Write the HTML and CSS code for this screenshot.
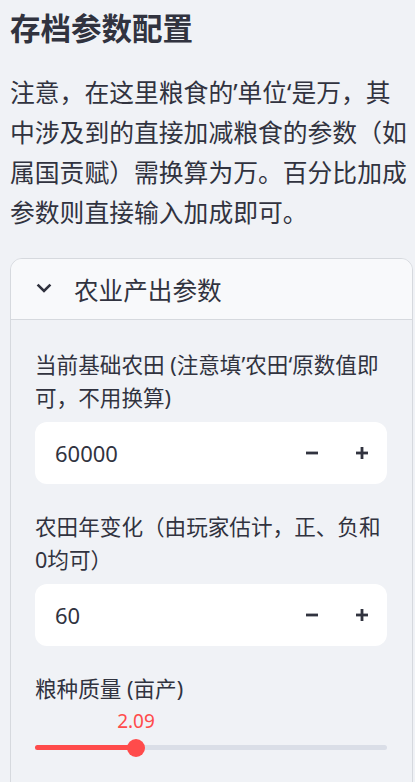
FILE: index.html
```html
<!DOCTYPE html>
<html>
<head>
    <meta charset="utf-8">
    <title>存档参数配置</title>
    <link rel="stylesheet" href="styles.css">
</head>
<body>
    <div class="page">
        <h1 class="title">存档参数配置</h1>
        <p class="note">注意，在这里粮食的’单位‘是万，其中涉及到的直接加减粮食的参数（如属国贡赋）需换算为万。百分比加成参数则直接输入加成即可。</p>

        <div class="expander">
            <div class="expander-header">
                <svg class="chevron" width="16" height="10" viewBox="0 0 16 10">
                    <polyline points="1.6,1.6 8,8 14.4,1.6" fill="none" stroke="#31333f" stroke-width="2.6"/>
                </svg>
                <span>农业产出参数</span>
            </div>

            <div class="expander-body">
                <div class="field">
                    <label class="field-label">当前基础农田 (注意填’农田‘原数值即可，不用换算)</label>
                    <div class="number-input">
                        <span class="number-value">60000</span>
                        <button class="step">
                            <svg width="12" height="12" viewBox="0 0 12 12"><rect x="0" y="4.6" width="12" height="2.8" fill="#31333f"/></svg>
                        </button>
                        <button class="step">
                            <svg width="12" height="12" viewBox="0 0 12 12"><rect x="0" y="4.6" width="12" height="2.8" fill="#31333f"/><rect x="4.6" y="0" width="2.8" height="12" fill="#31333f"/></svg>
                        </button>
                    </div>
                </div>

                <div class="field">
                    <label class="field-label">农田年变化（由玩家估计，正、负和0均可）</label>
                    <div class="number-input">
                        <span class="number-value">60</span>
                        <button class="step">
                            <svg width="12" height="12" viewBox="0 0 12 12"><rect x="0" y="4.6" width="12" height="2.8" fill="#31333f"/></svg>
                        </button>
                        <button class="step">
                            <svg width="12" height="12" viewBox="0 0 12 12"><rect x="0" y="4.6" width="12" height="2.8" fill="#31333f"/><rect x="4.6" y="0" width="2.8" height="12" fill="#31333f"/></svg>
                        </button>
                    </div>
                </div>

                <div class="field">
                    <label class="field-label">粮种质量 (亩产)</label>
                    <div class="slider">
                        <div class="slider-value" style="left: 28.7%">2.09</div>
                        <div class="slider-track">
                            <div class="slider-fill" style="width: 28.7%"></div>
                            <span class="slider-thumb" style="left: 28.7%"></span>
                        </div>
                    </div>
                </div>
            </div>
        </div>
    </div>
</body>
</html>
```

FILE: styles.css
```css
/* Page basics */
body {
    margin: 0;
    background: #f0f2f6;
    color: #31333f;
    font-family: "Noto Sans", "Noto Sans CJK SC", sans-serif;
}

.page {
    padding: 0 2px 0 10px;
}

.title {
    margin: 0;
    padding-top: 8px;
    font-size: 30.5px;
    line-height: 40px;
    font-weight: 700;
}

.note {
    margin: 24px 0 26px;
    font-size: 24.8px;
    line-height: 40px;
}

/* Expander */
.expander {
    border: 1px solid #d6d9de;
    border-radius: 12px;
    overflow: hidden;
    padding-bottom: 60px;
}

.expander-header {
    display: flex;
    align-items: center;
    gap: 22px;
    height: 60px;
    padding-left: 25px;
    background: #f8f9fb;
    border-bottom: 1px solid #d6d9de;
    font-size: 24.6px;
}

.chevron {
    margin-top: -2px;
}

.expander-body {
    display: flex;
    flex-direction: column;
    gap: 26px;
    padding: 28px 25px 0 24px;
}

/* Form fields */
.field-label {
    display: block;
    margin-bottom: 8px;
    font-size: 21.6px;
    line-height: 33px;
}

.number-input {
    display: flex;
    align-items: center;
    height: 62px;
    background: #fff;
    border-radius: 12px;
    padding-left: 20px;
}

.number-value {
    flex: 1;
    font-size: 22px;
}

.step {
    display: flex;
    align-items: center;
    justify-content: center;
    width: 50px;
    height: 62px;
    border: none;
    background: none;
    padding: 0;
}

/* Slider */
.slider {
    position: relative;
    padding-top: 21px;
}

.slider-value {
    position: absolute;
    top: -4px;
    transform: translateX(-50%);
    color: #ff4b4b;
    font-size: 19px;
    line-height: 24px;
}

.slider-track {
    position: relative;
    margin-top: 11px;
    height: 5px;
    border-radius: 3px;
    background: #dadee7;
}

.slider-fill {
    height: 100%;
    border-radius: 3px;
    background: #ff4b4b;
}

.slider-thumb {
    position: absolute;
    top: 50%;
    width: 18px;
    height: 18px;
    border-radius: 50%;
    background: #ff4b4b;
    transform: translate(-50%, -50%);
}
```
